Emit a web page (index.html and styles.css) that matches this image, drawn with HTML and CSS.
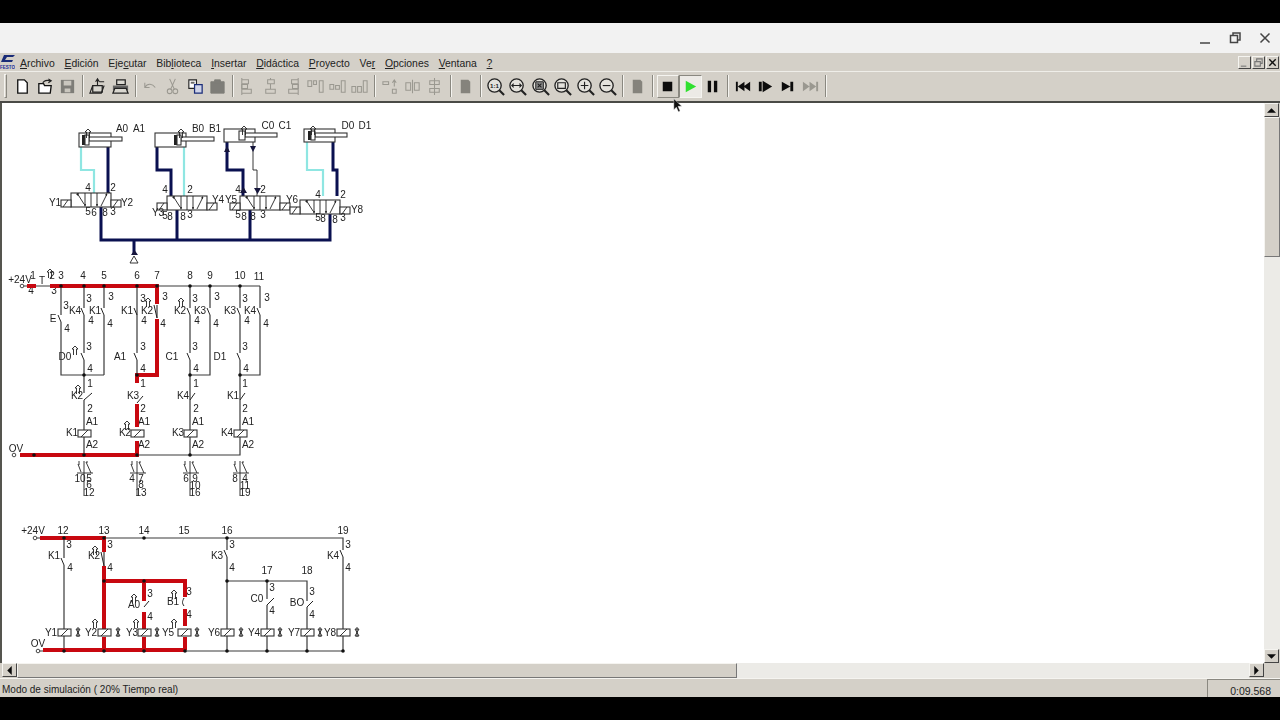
FILE: index.html
```html
<!DOCTYPE html>
<html lang="es">
<head>
<meta charset="utf-8">
<title>FluidSIM</title>
<link rel="stylesheet" href="styles.css">
</head>
<body>
<div class="letterbox"></div>
<div class="app">
  <header class="titlebar">
    <svg class="win-ico" viewBox="0 0 12 12"><path d="M1 8h10"/></svg>
    <svg class="win-ico" viewBox="0 0 12 12"><path d="M1.500 3.500h7v7h-7z"/><path d="M4 3V1h7v7H9"/></svg>
    <svg class="win-ico" viewBox="0 0 12 12"><path d="M1.500 1.500l9 9M10.500 1.500l-9 9"/></svg>
  </header>
  <nav class="menubar">
    <svg class="logo" viewBox="0 0 15 16">
      <path class="logo-mark" d="M4 0h11l-2 2H7L5 5h8l-1 2H1z"/>
      <text x="0" y="14" class="logo-text">FESTO</text>
    </svg>
    <ul class="menu">
      <li><u>A</u>rchivo</li><li><u>E</u>dición</li><li>Eje<u>c</u>utar</li><li>Bib<u>l</u>ioteca</li><li><u>I</u>nsertar</li><li><u>D</u>idáctica</li><li><u>P</u>royecto</li><li>Ve<u>r</u></li><li><u>O</u>pciones</li><li><u>V</u>entana</li><li><u>?</u></li>
    </ul>
    <div class="mdi">
      <span class="mdi-btn"><svg viewBox="0 0 12 12"><path class="g" d="M2 10h6" /></svg></span>
      <span class="mdi-btn"><svg viewBox="0 0 12 12"><path class="g" d="M2 5h6v5H2zM4 5V2h6v5H8"/></svg></span>
      <span class="mdi-btn"><svg viewBox="0 0 12 12"><path class="k" d="M2.500 2.500l7 7M9.500 2.500l-7 7"/></svg></span>
    </div>
  </nav>
  <div class="toolbar">
    <span class="grip"></span>
    <span class="tool"><svg viewBox="0 0 20 20"><path class="paper" d="M5 3h7l3 3v11H5z"/></svg></span>
    <span class="tool"><svg viewBox="0 0 20 20"><path class="paper" d="M3 7h5l1 2h7l-1 8H3z"/><path class="line" d="M7 7c1-3 4-4 8-3m-2-2l3 2-3 2"/></svg></span>
    <span class="tool"><svg viewBox="0 0 20 20"><path class="solid" d="M3 3h14v14H3z"/><path class="hole" d="M6 4h8v5H6zM7 12h6v4H7z"/></svg></span>
    <span class="sep"></span>
    <span class="tool"><svg viewBox="0 0 20 20"><path class="paper-g" d="M5 9h10v7H5z"/><path class="line" d="M5 9L2 17h12l3-8M10 9V3M8 5l2-3 2 3M12 5h5"/></svg></span>
    <span class="tool"><svg viewBox="0 0 20 20"><path class="paper-g" d="M6 3h9v5H6z"/><path class="dark-g" d="M2 9h16v5H2z"/><path class="paper-g" d="M4 12h12l2 5H2z"/></svg></span>
    <span class="sep"></span>
    <span class="tool"><svg viewBox="0 0 20 20"><path class="off" d="M4 6v5h5M4 11c3-5 8-4 11 0"/></svg></span>
    <span class="tool"><svg viewBox="0 0 20 20"><path class="off" d="M7 2l5 11M13 2L8 13"/><circle class="off" cx="7" cy="15" r="2.500"/><circle class="off" cx="13" cy="15" r="2.500"/></svg></span>
    <span class="tool"><svg viewBox="0 0 20 20"><path class="paper-s" d="M3 3h8v9H3z"/><path class="dark-g" d="M5 5h4v2H5z"/><path class="blue" d="M9 8h8v9H9z"/></svg></span>
    <span class="tool"><svg viewBox="0 0 20 20"><path class="fill-off" d="M3 5h14v12H3z"/><path class="fill-off" d="M7 3h6v3H7z"/></svg></span>
    <span class="sep"></span>
    <span class="tool"><svg viewBox="0 0 20 20"><path class="off" d="M4 3h7v4H4zM4 13h10v4H4zM4 1v18"/><path class="off" d="M4 8h6v4H4z"/></svg></span>
    <span class="tool"><svg viewBox="0 0 20 20"><path class="off" d="M7 3h7v4H7zM5 13h10v4H5zM10 1v2M10 7v6"/></svg></span>
    <span class="tool"><svg viewBox="0 0 20 20"><path class="off" d="M9 3h7v4H9zM6 13h10v4H6zM16 1v18"/><path class="off" d="M10 8h6v4h-6z"/></svg></span>
    <span class="tool"><svg viewBox="0 0 20 20"><path class="off" d="M2 4h4v6H2zM8 4h3v4H8zM14 4h4v12h-4z"/></svg></span>
    <span class="tool"><svg viewBox="0 0 20 20"><path class="off" d="M2 8h4v5H2zM8 9h4v4H8zM14 4h4v12h-4z"/></svg></span>
    <span class="tool"><svg viewBox="0 0 20 20"><path class="off" d="M2 10h4v6H2zM8 10h4v6H8zM14 4h4v12h-4z"/></svg></span>
    <span class="sep"></span>
    <span class="tool"><svg viewBox="0 0 20 20"><path class="off" d="M2 5h6v3H2zM12 13h4v4h-4zM14 3v7m-2-4l2-3 2 3"/></svg></span>
    <span class="tool"><svg viewBox="0 0 20 20"><path class="off" d="M3 6h5v8H3zM12 6h5v8h-5zM10 3v14"/></svg></span>
    <span class="tool"><svg viewBox="0 0 20 20"><path class="off" d="M5 4h10v4H5zM5 12h10v4H5zM10 1v18"/></svg></span>
    <span class="sep"></span>
    <span class="tool"><svg viewBox="0 0 20 20"><path class="sheet" d="M5 3h8l2 2v12H5z"/></svg></span>
    <span class="sep"></span>
    <span class="tool"><svg viewBox="0 0 20 20"><circle class="lens" cx="9" cy="9" r="7"/><path class="handle" d="M14 14l5 5"/><text class="lens-text" x="9" y="11.500">1:1</text></svg></span>
    <span class="tool"><svg viewBox="0 0 20 20"><circle class="lens" cx="9" cy="9" r="7"/><path class="handle" d="M14 14l5 5"/><path class="line" d="M4 9h10M6 7L4 9l2 2M12 7l2 2-2 2"/></svg></span>
    <span class="tool"><svg viewBox="0 0 20 20"><circle class="lens" cx="9" cy="9" r="7"/><path class="handle" d="M14 14l5 5"/><path class="dots" d="M5 5h8v8H5z"/><path class="line" d="M7 7l4 4M11 7l-4 4"/></svg></span>
    <span class="tool"><svg viewBox="0 0 20 20"><circle class="lens" cx="9" cy="9" r="7"/><path class="handle" d="M14 14l5 5"/><path class="line" d="M5 6h8v6H5z"/></svg></span>
    <span class="tool"><svg viewBox="0 0 20 20"><circle class="lens" cx="9" cy="9" r="7"/><path class="handle" d="M14 14l5 5"/><path class="line" d="M5 9h8M9 5v8"/></svg></span>
    <span class="tool"><svg viewBox="0 0 20 20"><circle class="lens" cx="9" cy="9" r="7"/><path class="handle" d="M14 14l5 5"/><path class="line" d="M5 9h8"/></svg></span>
    <span class="sep"></span>
    <span class="tool"><svg viewBox="0 0 20 20"><path class="sheet" d="M5 3h8l2 2v12H5z"/></svg></span>
    <span class="sep"></span>
    <span class="tool raised"><svg viewBox="0 0 20 20"><path class="black" d="M5 5h10v10H5z"/></svg></span>
    <span class="tool pressed"><svg viewBox="0 0 20 20"><path class="green" d="M5 4l11 6-11 6z"/></svg></span>
    <span class="tool"><svg viewBox="0 0 20 20"><path class="black" d="M5 4h3.500v12H5zM11.500 4H15v12h-3.500z"/></svg></span>
    <span class="sep"></span>
    <span class="tool"><svg viewBox="0 0 20 20"><path class="black" d="M2 5h2v10H2zM4 10l7-5v10zM10 10l7-5v10z"/></svg></span>
    <span class="tool"><svg viewBox="0 0 20 20"><path class="black" d="M3 5h3v10H3zM7 4l10 6-10 6z"/></svg></span>
    <span class="tool"><svg viewBox="0 0 20 20"><path class="black" d="M4 5l9 5-9 5zM13 5h3v10h-3z"/></svg></span>
    <span class="tool"><svg viewBox="0 0 20 20"><path class="fast" d="M2 5l7 5-7 5zM9 5l7 5-7 5zM16 5h2v10h-2z"/></svg></span>
    <span class="sep"></span>
  </div>
  <main class="workspace">
    <div class="view">
      <div class="canvas">
        <svg class="diagram" viewBox="2 103 1262 560" width="1262" height="560">
          <defs>
            <g id="valve">
              <rect class="sym" x="0" y="0" width="40" height="14"/>
              <path class="thin" d="M20 0v14M6 0l7 11M14 0v13M26 0v13M36 1l-6 12"/>
              <path class="tip" d="M5 1l3-1-1 3zM13 11h2l-1 3zM25 11h2l-1 3zM36 0l-2 2 2 1z"/>
            </g>
            <g id="sol">
              <rect class="sym" x="0" y="0" width="10" height="7"/>
              <path class="thin" d="M2 7l5-7"/>
            </g>
            <g id="coil">
              <rect class="sym" x="0" y="0" width="13" height="7"/>
              <path class="thin" d="M3 7l7-7"/>
            </g>
            <g id="cross"><path class="thin" d="M-2 1h4l-4 7h4zM0 -1v10"/></g>
            <g id="flag"><path class="thin" d="M-1.500 8V2h-1.500L0 -1l3 3H1.500v6"/></g>
            <g id="block">
              <path class="thin" d="M0 0v35M-5 0v4M-6 3l3 8M3 0v2M2 1l5 11M-7 12h16"/>
            </g>
          </defs>

          <!-- Pneumatic tubes -->
          <path class="cyan" d="M81 147v23h13v23M184 147v49M307 142v28h16v26"/>
          <path class="navy" d="M108 147v46M157 147v23h14v26M227 142v28h16v26M333 142v28h4v26"/>
          <path class="thin" d="M253 142v28h4v26"/>
          <path class="navy" d="M101 207v33h229v-26M177 240v-30M250 240v-30M134 240v15"/>

          <!-- Cylinders -->
          <rect class="sym" x="79" y="133" width="32" height="14"/>
          <rect class="sym" x="89" y="137" width="33" height="4"/>
          <rect class="dark" x="82" y="135" width="3" height="10"/>
          <rect class="sym" x="85" y="135" width="4" height="10"/>
          <rect class="sym" x="155" y="133" width="31" height="14"/>
          <rect class="sym" x="181" y="137" width="33" height="4"/>
          <rect class="dark" x="174" y="135" width="3" height="10"/>
          <rect class="sym" x="177" y="135" width="4" height="10"/>
          <rect class="sym" x="224" y="129" width="31" height="13"/>
          <rect class="sym" x="245" y="133" width="32" height="4"/>
          <rect class="sym" x="239" y="131" width="6" height="9"/>
          <rect class="sym" x="304" y="129" width="31" height="13"/>
          <rect class="sym" x="315" y="133" width="32" height="4"/>
          <rect class="dark" x="308" y="131" width="3" height="9"/>
          <rect class="sym" x="311" y="131" width="4" height="9"/>
          <use href="#flag" x="88" y="130"/>
          <use href="#flag" x="181" y="130"/>
          <use href="#flag" x="244" y="127"/>
          <use href="#flag" x="313" y="127"/>
          <path class="tip-k" d="M224 152l3-6 3 6zM250 146h6l-3 6zM131 255h7l-3.500-5zM254 188h7l-3.500 6zM240 193h7l-3.500-6z"/>
          <path class="thin" d="M134 256l-4 7h8z"/>
          <path class="tip-k" d="M107 192h3l-1.500 3z"/>

          <!-- Valves -->
          <use href="#valve" x="71" y="193"/><use href="#sol" x="61" y="200"/><use href="#sol" x="111" y="200"/>
          <use href="#valve" x="167" y="196"/><use href="#sol" x="157" y="203"/><use href="#sol" x="207" y="203"/>
          <use href="#valve" x="240" y="196"/><use href="#sol" x="230" y="203"/><use href="#sol" x="280" y="203"/>
          <use href="#valve" x="300" y="200"/><use href="#sol" x="290" y="207"/><use href="#sol" x="340" y="207"/>

          <g class="lbl">
            <text x="122" y="132">A0</text><text x="139" y="132">A1</text>
            <text x="198" y="132">B0</text><text x="215" y="132">B1</text>
            <text x="268" y="129">C0</text><text x="285" y="129">C1</text>
            <text x="348" y="129">D0</text><text x="365" y="129">D1</text>
            <text x="88" y="191">4</text><text x="113" y="191">2</text>
            <text x="55" y="206">Y1</text><text x="127" y="206">Y2</text>
            <text x="88" y="215">5</text><text x="94" y="216">6</text><text x="105" y="216">8</text><text x="113" y="215">3</text>
            <text x="165" y="193">4</text><text x="190" y="193">2</text>
            <text x="158" y="216">Y3</text><text x="218" y="203">Y4</text>
            <text x="165" y="219">5</text><text x="170" y="220">8</text><text x="183" y="220">8</text><text x="190" y="218">3</text>
            <text x="238" y="193">4</text><text x="263" y="193">2</text>
            <text x="231" y="203">Y5</text><text x="292" y="203">Y6</text>
            <text x="238" y="218">5</text><text x="244" y="220">8</text><text x="253" y="220">8</text><text x="263" y="218">3</text>
            <text x="318" y="198">4</text><text x="343" y="198">2</text>
            <text x="357" y="213">Y8</text>
            <text x="318" y="221">5</text><text x="323" y="222">8</text><text x="335" y="223">8</text><text x="343" y="221">3</text>

            <text x="20" y="283">+24V</text><text x="33" y="279">1</text><text x="31" y="294">4</text><text x="42" y="284">T</text>
            <text x="52" y="279">2</text><text x="61" y="279">3</text><text x="54" y="294">3</text>
            <text x="83" y="279">4</text><text x="104" y="279">5</text><text x="137" y="279">6</text><text x="157" y="279">7</text><text x="190" y="279">8</text><text x="210" y="279">9</text><text x="240" y="279">10</text><text x="259" y="280">11</text>
            <text x="66" y="309">3</text><text x="75" y="314">K4</text><text x="67" y="332">4</text><text x="53" y="322">E</text>
            <text x="89" y="302">3</text><text x="95" y="314">K1</text><text x="91" y="324">4</text><text x="89" y="350">3</text><text x="65" y="360">D0</text><text x="90" y="372">4</text>
            <text x="111" y="300">3</text><text x="110" y="327">4</text>
            <text x="127" y="314">K1</text><text x="143" y="302">3</text><text x="144" y="324">4</text><text x="143" y="350">3</text><text x="120" y="360">A1</text><text x="143" y="372">4</text>
            <text x="147" y="314">K2</text><text x="165" y="300">3</text><text x="163" y="327">4</text>
            <text x="180" y="314">K2</text><text x="195" y="302">3</text><text x="197" y="324">4</text><text x="195" y="350">3</text><text x="172" y="360">C1</text><text x="196" y="372">4</text>
            <text x="200" y="314">K3</text><text x="217" y="300">3</text><text x="216" y="327">4</text>
            <text x="230" y="314">K3</text><text x="245" y="302">3</text><text x="247" y="324">4</text><text x="245" y="350">3</text><text x="220" y="360">D1</text><text x="246" y="372">4</text>
            <text x="250" y="314">K4</text><text x="267" y="301">3</text><text x="266" y="327">4</text>
            <text x="90" y="387">1</text><text x="143" y="387">1</text><text x="196" y="387">1</text><text x="245" y="387">1</text>
            <text x="77" y="399">K2</text><text x="133" y="399">K3</text><text x="183" y="399">K4</text><text x="233" y="399">K1</text>
            <text x="90" y="412">2</text><text x="143" y="412">2</text><text x="196" y="412">2</text><text x="245" y="412">2</text>
            <text x="92" y="425">A1</text><text x="144" y="425">A1</text><text x="198" y="425">A1</text><text x="248" y="425">A1</text>
            <text x="72" y="436">K1</text><text x="125" y="436">K2</text><text x="178" y="436">K3</text><text x="227" y="436">K4</text>
            <text x="92" y="448">A2</text><text x="144" y="448">A2</text><text x="198" y="448">A2</text><text x="248" y="448">A2</text>
            <text x="16" y="452">OV</text>
            <text x="80" y="482">10</text><text x="89" y="482">5</text><text x="89" y="488">6</text><text x="89" y="496">12</text>
            <text x="132" y="482">4</text><text x="141" y="482">7</text><text x="141" y="488">8</text><text x="141" y="496">13</text>
            <text x="186" y="482">6</text><text x="195" y="482">9</text><text x="195" y="489">10</text><text x="195" y="496">16</text>
            <text x="235" y="482">8</text><text x="245" y="482">4</text><text x="245" y="489">11</text><text x="245" y="496">19</text>

            <text x="33" y="534">+24V</text><text x="63" y="534">12</text><text x="104" y="534">13</text><text x="144" y="534">14</text><text x="184" y="534">15</text><text x="227" y="534">16</text><text x="343" y="534">19</text>
            <text x="267" y="574">17</text><text x="307" y="574">18</text>
            <text x="69" y="548">3</text><text x="54" y="559">K1</text><text x="70" y="571">4</text>
            <text x="110" y="548">3</text><text x="94" y="559">K2</text><text x="110" y="571">4</text>
            <text x="232" y="548">3</text><text x="217" y="559">K3</text><text x="232" y="571">4</text>
            <text x="348" y="548">3</text><text x="333" y="559">K4</text><text x="348" y="571">4</text>
            <text x="150" y="597">3</text><text x="134" y="608">A0</text><text x="150" y="620">4</text>
            <text x="189" y="595">3</text><text x="173" y="605">B1</text><text x="189" y="618">4</text>
            <text x="272" y="591">3</text><text x="257" y="602">C0</text><text x="272" y="614">4</text>
            <text x="312" y="595">3</text><text x="297" y="606">BO</text><text x="312" y="618">4</text>
            <text x="51" y="636">Y1</text><text x="91" y="636">Y2</text><text x="132" y="636">Y3</text><text x="168" y="636">Y5</text><text x="214" y="636">Y6</text><text x="254" y="636">Y4</text><text x="294" y="636">Y7</text><text x="330" y="636">Y8</text>
            <text x="38" y="647">OV</text>
          </g>

          <!-- Circuit 1: wires -->
          <path class="wire" d="M24 286h136M157 286h103M61 286v29M61 322v53h43M84 286v22M84 315v38M84 360v33M84 400v30M84 437v18M104 286v22M104 315v60M137 286v67M137 360v15M157 305v13M190 286v22M190 315v38M190 360v70M190 437v18M210 286v22M210 315v60h-20M240 286v22M240 315v38M240 360v70M240 437v18H137M260 286v22M260 315v60h-20"/>
          <path class="slash" d="M58 315l3 7M81 308l3 7M101 308l3 7M134 308l3 7M154 305l3 13M187 308l3 7M207 308l3 7M237 308l3 7M257 308l3 7M81 353l3 7M134 353l3 7M187 353l3 7M237 353l3 7M84 400l8-7M137 403l6-7M190 400l5-7M240 400l5-7"/>
          <path class="red" d="M27 286h9M50 286h107v18M157 319v56h-20v8M137 404v23M137 441v14H20"/>
          <circle class="port" cx="22" cy="286" r="1.800"/><circle class="port" cx="14" cy="455" r="1.800"/>
          <path class="dot" d="M61 286h.01M84 286h.01M104 286h.01M137 286h.01M157 286h.01M190 286h.01M210 286h.01M240 286h.01M84 375h.01M137 375h.01M190 375h.01M240 375h.01M34 455h.01M84 455h.01M137 455h.01M190 455h.01"/>
          <use href="#coil" x="78" y="430"/><use href="#coil" x="131" y="430"/><use href="#coil" x="184" y="430"/><use href="#coil" x="234" y="430"/>
          <use href="#block" x="84" y="461"/>
          <use href="#block" x="137" y="461"/>
          <use href="#block" x="190" y="461"/>
          <use href="#block" x="240" y="461"/>
          <use href="#flag" x="75" y="347"/><use href="#flag" x="78" y="386"/><use href="#flag" x="148" y="299"/><use href="#flag" x="181" y="299"/><use href="#flag" x="50" y="270"/><use href="#flag" x="127" y="422"/>

          <!-- Circuit 2: wires -->
          <path class="wire" d="M37 538h306v12M343 557v93M64 538v20M64 565v85M104 552v14M227 538v12M227 557v93M227 581h80v20M307 607v22M267 581v18M267 605v24M267 636v14M307 636v14M38 651h305"/>
          <path class="slash" d="M61 558l3 7M101 552l3 14M224 550l3 7M340 550l3 7M144 607l5-6M184 598c-2 4-2 5 0 8M267 605l7-7M307 607l6-6"/>
          <path class="red" d="M40 538h64v14M104 566v63M104 581h81v16M144 581v20M144 612v17M185 609v17M43 650h142M104 637v13M144 637v13M185 637v13"/>
          <circle class="port" cx="35" cy="538" r="1.800"/><circle class="port" cx="38" cy="651" r="1.800"/>
          <path class="dot" d="M64 538h.01M104 538h.01M144 538h.01M227 538h.01M104 581h.01M144 581h.01M227 581h.01M267 581h.01M64 651h.01M104 651h.01M144 651h.01M185 651h.01M227 651h.01M267 651h.01M307 651h.01M343 651h.01"/>
          <use href="#coil" x="58" y="629"/><use href="#coil" x="98" y="629"/><use href="#coil" x="138" y="629"/><use href="#coil" x="178" y="629"/><use href="#coil" x="221" y="629"/><use href="#coil" x="261" y="629"/><use href="#coil" x="301" y="629"/><use href="#coil" x="337" y="629"/>
          <use href="#cross" x="78" y="628"/><use href="#cross" x="118" y="628"/><use href="#cross" x="157" y="628"/><use href="#cross" x="197" y="628"/><use href="#cross" x="241" y="628"/><use href="#cross" x="280" y="628"/><use href="#cross" x="320" y="628"/><use href="#cross" x="357" y="628"/>
          <use href="#flag" x="95" y="547"/><use href="#flag" x="134" y="595"/><use href="#flag" x="174" y="591"/><use href="#flag" x="95" y="620"/><use href="#flag" x="136" y="620"/><use href="#flag" x="174" y="620"/>
        </svg>
      </div>
      <div class="scroll-v">
        <span class="arrow"><svg viewBox="0 0 8 8"><path class="black" d="M0 6l4-4 4 4z"/></svg></span>
        <span class="thumb-v"></span>
        <span class="track"></span>
        <span class="arrow"><svg viewBox="0 0 8 8"><path class="black" d="M0 2l4 4 4-4z"/></svg></span>
      </div>
    </div>
    <div class="scroll-h">
      <span class="arrow"><svg viewBox="0 0 8 8"><path class="black" d="M6 0L2 4l4 4z"/></svg></span>
      <span class="thumb-h"></span>
      <span class="track"></span>
      <span class="arrow"><svg viewBox="0 0 8 8"><path class="black" d="M2 0l4 4-4 4z"/></svg></span>
      <span class="corner"></span>
    </div>
  </main>
  <footer class="statusbar">
    <span class="status-text">Modo de simulación ( 20% Tiempo real)</span>
    <span class="status-time">0:09.568</span>
  </footer>
</div>
<div class="letterbox"></div>
<svg class="cursor" viewBox="0 0 12 18"><path d="M1 1v13l3-3 2.500 5.500 2-1L6 10h4.500z"/></svg>
</body>
</html>
```

FILE: styles.css
```css
* { box-sizing: border-box; }
html, body { margin: 0; height: 720px; overflow: hidden; background: #000; }
body {
  display: flex;
  flex-direction: column;
  font-family: "Liberation Sans", Arial, sans-serif;
  color: #222;
}
.letterbox { height: 23px; flex: none; background: #000; }
.app { height: 674px; flex: none; display: flex; flex-direction: column; background: #d4d0c8; }

.titlebar {
  height: 30px; flex: none; background: #f2f2f2;
  display: flex; justify-content: flex-end; align-items: center;
  gap: 18px; padding: 0 9px 0 0;
}
.win-ico { width: 12px; height: 12px; fill: none; stroke: #444; stroke-width: 1.500; }
.win-ico:first-child { margin-top: 5px; }

.menubar { height: 19px; flex: none; display: flex; align-items: center; border-bottom: 1px solid #efeee9; }
.logo { width: 15px; height: 16px; flex: none; margin-top: 1px; }
.logo-mark { fill: #1a2c78; }
.logo-text { font: bold 4.500px "Liberation Sans", sans-serif; fill: #1a2c9a; }
.menu { display: flex; gap: 9.800px; margin: 2px 0 0 5px; padding: 0; list-style: none; font-size: 10.400px; color: #222; }
.mdi { margin-left: auto; display: flex; gap: 1px; padding-right: 1px; }
.mdi-btn {
  width: 13px; height: 13px; background: #d4d0c8;
  border: 1px solid; border-color: #f5f4f0 #444 #444 #f5f4f0;
  display: flex;
}
.mdi-btn svg { width: 11px; height: 11px; fill: none; }
.g { stroke: #777; stroke-width: 1.200; }
.k { stroke: #111; stroke-width: 1.500; }

.toolbar {
  height: 31px; flex: none; display: flex; align-items: center;
  padding: 0 0 1px 4px;
  border-bottom: 2px solid #4a4a46;
}
.grip { width: 3px; height: 24px; margin-right: 4.500px; border: 1px solid; border-color: #f5f4f0 #8a8880 #8a8880 #f5f4f0; }
.tool { width: 22.400px; height: 23px; flex: none; display: flex; align-items: center; justify-content: center; }
.tool svg { width: 19px; height: 19px; fill: none; }
.sep { width: 7.900px; height: 22px; flex: none; display: flex; justify-content: center; }
.sep::before { content: ""; width: 1px; height: 100%; background: #8a8880; box-shadow: 1px 0 0 #f5f4f0; }
.raised { border: 1px solid; border-color: #f5f4f0 #8a8880 #8a8880 #f5f4f0; }
.pressed {
  border: 1px solid; border-color: #8a8880 #f5f4f0 #f5f4f0 #8a8880;
  background: #eceae6;
}
.paper { fill: #fff; stroke: #111; stroke-width: 1.400; }
.paper-g { fill: #d9d7d0; stroke: #222; stroke-width: 1.300; }
.dark-g { fill: #666; }
.paper-s { fill: #fff; stroke: #222; stroke-width: 1.200; }
.line { fill: none; stroke: #222; stroke-width: 1.200; }
.solid { fill: #7e7d78; }
.hole { fill: #c9c6be; }
.dark { fill: #222; }
.off { fill: none; stroke: #9a9890; stroke-width: 1.100; }
.fill-off { fill: #7e7d78; stroke: #7e7d78; }
.blue { fill: #cfd4e8; stroke: #1a2c78; stroke-width: 1.300; }
.sheet { fill: #85837c; }
.lens { fill: #e4e2dc; stroke: #222; stroke-width: 1.400; }
.handle { stroke: #222; stroke-width: 2.200; fill: none; }
.lens-text { font: bold 6.500px "Liberation Sans", sans-serif; fill: #222; text-anchor: middle; }
.dots { fill: #888; stroke: #222; }
.black { fill: #0c0c0c; }
.green { fill: #2fe02f; }
.fast { fill: #9a9890; }

.workspace { flex: 1; min-height: 0; display: flex; flex-direction: column; }
.view { flex: 1; min-height: 0; display: flex; }
.canvas { flex: 1; min-width: 0; background: #fff; border-left: 2px solid #55554f; overflow: hidden; }
.diagram { display: block; filter: blur(.3px); }
.scroll-v { width: 16px; flex: none; display: flex; flex-direction: column; background: #d4d0c8; }
.scroll-h { height: 15px; flex: none; display: flex; padding-left: 2px; }
.arrow {
  width: 15px; height: 14px; flex: none; background: #d4d0c8;
  border: 1px solid; border-color: #f5f4f0 #444 #444 #f5f4f0;
  display: flex; align-items: center; justify-content: center;
}
.arrow svg { width: 9px; height: 9px; }
.thumb-v { height: 140px; flex: none; background: #d4d0c8; border: 1px solid; border-color: #f5f4f0 #777 #777 #f5f4f0; }
.thumb-h { width: 720px; flex: none; background: #d4d0c8; border: 1px solid; border-color: #f5f4f0 #777 #777 #f5f4f0; }
.track { flex: 1; background: #ecebe7; }
.corner { width: 16px; flex: none; background: #d4d0c8; }

.statusbar {
  height: 19px; flex: none; display: flex; justify-content: space-between; align-items: stretch;
  border-top: 1px solid #f5f4f0;
  font-size: 10.500px; line-height: 22px;
}
.status-text { padding-left: 2px; font-size: 10px; }
.status-time { width: 73px; text-align: right; padding-right: 9px; border-left: 1px solid #8a8880; border-top: 1px solid #8a8880; }

.cursor { position: absolute; left: 673px; top: 98px; width: 10px; height: 15px; fill: #111; stroke: #eee; stroke-width: .5; }

.sym { fill: #fff; stroke: #333; stroke-width: 1.100; }
.thin { fill: none; stroke: #222; stroke-width: .9; }
.tip { fill: #222; }
.tip-k { fill: #16163c; }
.cyan { fill: none; stroke: #8fe6e2; stroke-width: 2.200; }
.navy { fill: none; stroke: #0a1050; stroke-width: 3; }
.wire { fill: none; stroke: #3a3a3a; stroke-width: 1.200; }
.slash { fill: none; stroke: #222; stroke-width: 1; }
.red { fill: none; stroke: #c80810; stroke-width: 4; stroke-linejoin: miter; }
.port { fill: #fff; stroke: #333; stroke-width: .9; }
.dot { fill: none; stroke: #111; stroke-width: 3.600; stroke-linecap: round; }
.lbl text { font: 10px "Liberation Sans", sans-serif; fill: #222; text-anchor: middle; }
```
